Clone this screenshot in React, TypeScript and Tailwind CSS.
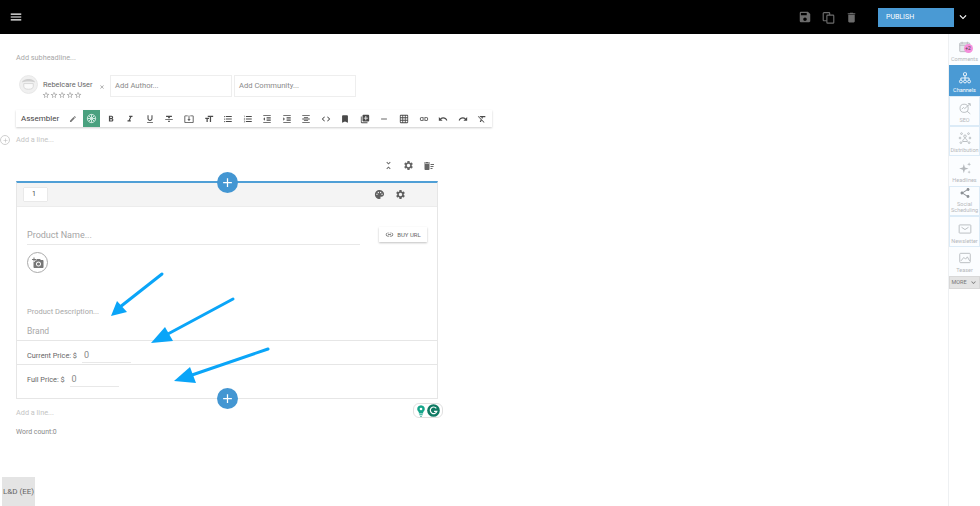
import type { ReactNode } from 'react';
import {
  MdAdd,
  MdAddAPhoto,
  MdBookmark,
  MdClose,
  MdCode,
  MdDelete,
  MdDeleteSweep,
  MdEdit,
  MdFormatAlignCenter,
  MdFormatBold,
  MdFormatClear,
  MdFormatIndentDecrease,
  MdFormatIndentIncrease,
  MdFormatItalic,
  MdFormatListBulleted,
  MdFormatListNumbered,
  MdFormatSize,
  MdFormatStrikethrough,
  MdFormatUnderlined,
  MdGridOn,
  MdInsertLink,
  MdKeyboardArrowDown,
  MdLibraryAdd,
  MdMenu,
  MdPalette,
  MdRedo,
  MdRemove,
  MdSave,
  MdSettings,
  MdShare,
  MdStarBorder,
  MdSystemUpdateAlt,
  MdUndo,
  MdUnfoldLess,
} from 'react-icons/md';

const toolbarIcons = [
  MdFormatBold,
  MdFormatItalic,
  MdFormatUnderlined,
  MdFormatStrikethrough,
  MdSystemUpdateAlt,
  MdFormatSize,
  MdFormatListBulleted,
  MdFormatListNumbered,
  MdFormatIndentDecrease,
  MdFormatIndentIncrease,
  MdFormatAlignCenter,
  MdCode,
  MdBookmark,
  MdLibraryAdd,
  MdRemove,
  MdGridOn,
  MdInsertLink,
  MdUndo,
  MdRedo,
  MdFormatClear,
];

function Line({ children }: { children: ReactNode }) {
  return (
    <svg viewBox="0 0 24 24" className="h-[14px] w-[14px]" fill="none" stroke="currentColor" strokeWidth="1.5">
      {children}
    </svg>
  );
}

const sideItems: { label: string[]; icon: ReactNode; h: string; boxed?: boolean; active?: boolean }[] = [
  {
    label: ['Comments'],
    h: 'h-[31px]',
    icon: (
      <span className="relative block h-[14px] w-[14px]">
        <Line>
          <rect x="3" y="5" width="17" height="15" rx="1" fill="#e5e7eb" />
          <path d="M3 9h17M7 3v4M16 3v4" />
        </Line>
        <span className="absolute top-[4px] left-[6px] flex h-[9px] w-[9px] items-center justify-center rounded-full bg-[#f58fdc] text-[5px] leading-none text-[#444]">
          +2
        </span>
      </span>
    ),
  },
  {
    label: ['Channels'],
    h: 'h-[31px]',
    active: true,
    icon: (
      <Line>
        <rect x="9.5" y="3" width="5" height="5" rx="1" />
        <circle cx="5" cy="18" r="2.5" />
        <circle cx="12" cy="18" r="2.5" />
        <circle cx="19" cy="18" r="2.5" />
        <path d="M12 8v7.5M5 15.5V12h14v3.5" />
      </Line>
    ),
  },
  {
    label: ['SEO'],
    h: 'h-[30px]',
    boxed: true,
    icon: (
      <Line>
        <circle cx="10.5" cy="12.5" r="7" />
        <path d="M15.5 17.5L21 22M6.5 14l3-3 2 2 9-8M17 4.5h4v4" />
      </Line>
    ),
  },
  {
    label: ['Distribution'],
    h: 'h-[30px]',
    boxed: true,
    icon: (
      <Line>
        <circle cx="12" cy="9" r="2.2" />
        <path d="M8 18c0-3 2-5 4-5s4 2 4 5z" />
        <circle cx="3.5" cy="12" r="1.5" />
        <circle cx="20.5" cy="12" r="1.5" />
        <circle cx="6" cy="4.5" r="1.5" />
        <circle cx="18" cy="4.5" r="1.5" />
        <circle cx="5" cy="20" r="1.5" />
        <circle cx="19" cy="20" r="1.5" />
      </Line>
    ),
  },
  {
    label: ['Headlines'],
    h: 'h-[30px]',
    icon: (
      <svg viewBox="0 0 24 24" className="h-[14px] w-[14px]" fill="currentColor">
        <path d="M10 5l1.8 6.2L18 13l-6.2 1.8L10 21l-1.8-6.2L2 13l6.2-1.8z" />
        <path d="M19 2l.8 2.7 2.7.8-2.7.8L19 9l-.8-2.7-2.7-.8 2.7-.8zM19 16l.7 2.3 2.3.7-2.3.7L19 22l-.7-2.3-2.3-.7 2.3-.7z" />
      </svg>
    ),
  },
  {
    label: ['Social', 'Scheduling'],
    h: 'h-[30px]',
    boxed: true,
    icon: <MdShare className="h-[12px] w-[12px] text-[#8a8f94]" />,
  },
  {
    label: ['Newsletter'],
    h: 'h-[31px]',
    boxed: true,
    icon: (
      <Line>
        <rect x="2" y="5" width="20" height="14" rx="1" />
        <path d="M6 9l6 4 6-4" />
      </Line>
    ),
  },
  {
    label: ['Teaser'],
    h: 'h-[29px]',
    icon: (
      <Line>
        <rect x="3" y="4" width="18" height="16" rx="1.5" />
        <path d="M5 17l5-6 3 3 3-4 4 7" />
      </Line>
    ),
  },
];

function Sidebar() {
  return (
    <aside className="flex w-[32px] shrink-0 flex-col self-stretch border-l border-[#eef0f2] bg-white">
      {sideItems.map((item) => (
        <div
          key={item.label[0]}
          className={`flex ${item.h} flex-col items-center justify-end overflow-hidden text-center text-[5.5px] leading-[6px] ${
            item.active
              ? 'bg-[#4a9ad4] pb-[3px] text-white'
              : item.boxed
                ? 'border border-[#dcebf7] bg-[#fbfdff] pb-[2px] text-[#b5b8bb]'
                : 'bg-[#fbfdff] pb-[3px] text-[#b5b8bb]'
          }`}
        >
          <span className={`mb-[2px] ${item.active ? 'text-white' : 'text-[#b4b8bc]'}`}>{item.icon}</span>
          {item.label.map((l) => (
            <span key={l}>{l}</span>
          ))}
        </div>
      ))}
      <div className="flex h-[13px] items-center justify-center gap-[2px] border border-[#d8d8d8] bg-[#e4e4e4] text-[5.5px] text-[#777]">
        MORE
        <MdKeyboardArrowDown className="h-[9px] w-[9px]" />
      </div>
    </aside>
  );
}

function Toolbar() {
  return (
    <div className="mt-[13px] flex h-[17px] w-[476px] items-center bg-white shadow-[0_1px_2px_rgba(0,0,0,0.2)]">
      <span className="ml-[5px] w-[49px] text-[8px] text-[#444]">Assembler</span>
      <MdEdit className="h-[8px] w-[8px] text-[#777]" />
      <span className="ml-[6px] flex h-[17px] w-[18px] items-center justify-center bg-[#4aa17f]">
        <svg viewBox="0 0 24 24" className="h-[11px] w-[11px]" fill="none" stroke="#d8efe6" strokeWidth="2">
          <circle cx="12" cy="12" r="9" />
          <path d="M12 3v18M3 12h18M6 6l12 12M18 6L6 18" />
        </svg>
      </span>
      <div className="ml-[1px] flex items-center">
        {toolbarIcons.map((Icon, i) => (
          <span key={i} className="flex w-[19.55px] items-center justify-center text-[#4a4a4a]">
            <Icon className="h-[10px] w-[10px]" />
          </span>
        ))}
      </div>
    </div>
  );
}

function PlusButton({ className }: { className: string }) {
  return (
    <span className={`absolute left-[200px] flex h-[21px] w-[21px] items-center justify-center rounded-full bg-[#4396d2] text-white ${className}`}>
      <MdAdd className="h-[15px] w-[15px]" />
    </span>
  );
}

function ProductCard() {
  return (
    <div className="relative w-[422px] border-x border-b border-[#e6e6e6] border-t-2 border-t-[#4f9fd6]">
      <PlusButton className="-top-[11px]" />
      <div className="flex h-[24px] items-center border-b border-[#ececec] bg-[#f4f4f4] pr-[31px] pl-[7px]">
        <span className="flex h-[13px] w-[23px] items-center bg-white pl-[8px] text-[7px] text-[#444] shadow-[0_0_1px_rgba(0,0,0,0.25)]">
          1
        </span>
        <MdPalette className="ml-auto h-[11px] w-[11px] text-[#5f5f5f]" />
        <MdSettings className="ml-[10px] h-[11px] w-[11px] text-[#5f5f5f]" />
      </div>
      <div className="flex items-start px-[10px] pt-[21px]">
        <div className="h-[17px] w-[333px] border-b border-[#e8e8e8] text-[9px] leading-[14px] text-[#a5a5a5]">
          Product Name...
        </div>
        <span className="-mt-[1px] ml-[19px] flex h-[15px] w-[48px] items-center justify-center gap-[3px] bg-white text-[6px] text-[#666] shadow-[0_1px_2px_rgba(0,0,0,0.25)]">
          <MdInsertLink className="h-[9px] w-[9px]" />
          BUY URL
        </span>
      </div>
      <div className="mt-[7px] ml-[10px] flex h-[21px] w-[21px] items-center justify-center rounded-full border border-[#aaa]">
        <MdAddAPhoto className="h-[12px] w-[12px] text-[#777]" />
      </div>
      <div className="mt-[34px] pl-[10px] text-[7.5px] leading-[10px] text-[#a8a8a8]">Product Description...</div>
      <div className="mt-[8px] pl-[10px] text-[8.5px] leading-[12px] text-[#a8a8a8]">Brand</div>
      <div className="mt-[3px] flex h-[24px] items-start border-t border-[#e6e6e6] pl-[10px] text-[7.3px] text-[#666]">
        <span className="mt-[10px] leading-[10px]">Current Price: $</span>
        <span className="mt-[8px] ml-[5px] h-[14px] w-[49px] border-b border-[#e8e8e8] pl-[2px] text-[9px] leading-[13px] text-[#888]">0</span>
      </div>
      <div className="flex h-[34px] items-start border-t border-[#e6e6e6] pl-[10px] text-[7.3px] text-[#666]">
        <span className="mt-[10px] leading-[10px]">Full Price: $</span>
        <span className="mt-[8px] ml-[5px] h-[14px] w-[49px] border-b border-[#e8e8e8] pl-[2px] text-[9px] leading-[13px] text-[#888]">0</span>
      </div>
      <PlusButton className="-bottom-[11px]" />
      <span className="absolute top-[220px] left-[396px] flex h-[15px] w-[30px] items-center justify-center gap-[1px] rounded-[6px] border border-[#e0e0e0] bg-white">
        <svg viewBox="0 0 12 14" className="h-[12px] w-[10px]" fill="#15a58a">
          <path d="M6 0a4.6 4.6 0 0 0-2.6 8.4V10h5.2V8.4A4.6 4.6 0 0 0 6 0zM4 11h4v1.2H4zM5 13h2v1H5z" />
          <circle cx="6" cy="4.6" r="1.6" fill="#fff" />
        </svg>
        <svg viewBox="0 0 14 14" className="h-[13px] w-[13px]">
          <circle cx="7" cy="7" r="6.8" fill="#0f7a63" />
          <path d="M10 4.6A3.6 3.6 0 1 0 10.6 8H7.6" fill="none" stroke="#fff" strokeWidth="1.3" />
        </svg>
      </span>
    </div>
  );
}

export default function App() {
  return (
    <div className="relative h-[506px] w-[980px] overflow-hidden bg-white font-['Roboto',sans-serif]">
      <header className="flex h-[34px] items-center bg-black pr-[10px] pl-[9px]">
        <MdMenu className="h-[14px] w-[14px] text-white" />
        <div className="ml-auto flex items-center text-[#6c6c6c]">
          <MdSave className="h-[14px] w-[14px]" />
          <svg viewBox="0 0 16 16" className="ml-[10px] h-[13px] w-[13px]" fill="none" stroke="currentColor" strokeWidth="1.4">
            <rect x="1.5" y="2" width="8" height="10" rx="1" />
            <rect x="6" y="5" width="8.5" height="10" rx="1" fill="#000" />
          </svg>
          <MdDelete className="ml-[10px] h-[13px] w-[13px]" />
          <span className="ml-[20px] flex h-[19px] w-[76px] items-center bg-[#4a9ad4] pl-[8px] text-[7px] text-white">
            PUBLISH
          </span>
          <MdKeyboardArrowDown className="ml-[2px] h-[14px] w-[14px] text-white" />
        </div>
      </header>
      <div className="flex h-[472px]">
        <main className="relative flex min-w-0 flex-1 flex-col pl-[16px]">
          <p className="mt-[19px] text-[7.3px] leading-[10px] text-[#a8a8a8]">Add subheadline...</p>
          <div className="mt-[12px] flex h-[22px] items-start pl-[3px]">
            <svg viewBox="0 0 20 20" className="h-[19px] w-[19px]">
              <circle cx="10" cy="10" r="9.5" fill="#f0f0f0" stroke="#dedede" strokeWidth="0.6" />
              <path d="M3 8c1-5 13-5 14 0-3-1.5-11-1.5-14 0z" fill="#cfcfcf" />
              <path d="M5 9h10v3c0 2-2 3-5 3s-5-1-5-3z" fill="#fafafa" stroke="#cfcfcf" strokeWidth="0.8" />
            </svg>
            <div className="ml-[5px] w-[50px] pt-[5px]">
              <div className="text-[7.4px] leading-[10px] whitespace-nowrap text-[#666]">Rebelcare User</div>
              <div className="mt-[1px] -ml-[1px] flex text-[#999]">
                {[0, 1, 2, 3, 4].map((i) => (
                  <MdStarBorder key={i} className="h-[8px] w-[8px]" />
                ))}
              </div>
            </div>
            <MdClose className="mt-[9px] ml-[6px] h-[6px] w-[6px] text-[#777]" />
            <span className="ml-[5px] flex h-[22px] w-[122px] items-center border border-[#eeeeee] pl-[4px] text-[7.6px] text-[#8a8a8a]">
              Add Author...
            </span>
            <span className="ml-[2px] flex h-[22px] w-[122px] items-center border border-[#eeeeee] pl-[4px] text-[7.6px] text-[#8a8a8a]">
              Add Community...
            </span>
          </div>
          <Toolbar />
          <div className="relative mt-[8px] text-[7.3px] leading-[10px] text-[#c4c4c4]">
            <span className="absolute top-0 -left-[16px] flex h-[10px] w-[10px] items-center justify-center rounded-full border border-[#cfcfcf]">
              <MdAdd className="h-[7px] w-[7px] text-[#bbb]" />
            </span>
            Add a line...
          </div>
          <div className="mt-[15px] flex h-[11px] w-[422px] items-center justify-end gap-[9px] pr-[3px] text-[#666]">
            <MdUnfoldLess className="h-[11px] w-[11px]" />
            <MdSettings className="h-[11px] w-[11px]" />
            <MdDeleteSweep className="h-[12px] w-[12px]" />
          </div>
          <div className="mt-[10px]">
            <ProductCard />
          </div>
          <p className="mt-[9px] text-[7.3px] leading-[10px] text-[#c4c4c4]">Add a line...</p>
          <p className="mt-[9px] text-[6.9px] leading-[10px] text-[#888]">Word count:0</p>
          <div className="mt-[40px] -ml-[14px] flex h-[29px] w-[33px] items-center justify-center bg-[#e4e4e4] text-[8px] text-[#666]">
            L&amp;D (EE)
          </div>
        </main>
        <Sidebar />
      </div>
      <svg className="pointer-events-none absolute top-0 left-0 h-[506px] w-[980px]" viewBox="0 0 980 506">
        <g fill="none" stroke="#0aa5f8" strokeWidth="3" strokeLinecap="round">
          <path d="M162 274L120 307" />
          <path d="M233 299L166 335" />
          <path d="M268 349L192 375" />
        </g>
        <g fill="#0aa5f8">
          <path d="M111 316L117 301L127 312z" />
          <path d="M151 343L165 327L173 341z" />
          <path d="M174 381L190 367L196 383z" />
        </g>
      </svg>
    </div>
  );
}
